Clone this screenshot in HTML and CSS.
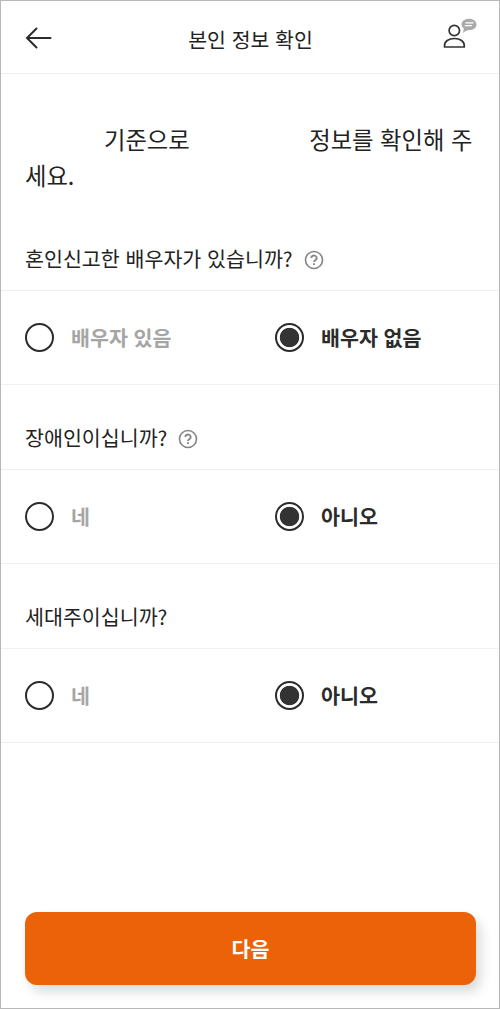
FILE: index.html
```html
<!DOCTYPE html>
<html lang="ko">
<head>
<meta charset="utf-8">
<title>본인 정보 확인</title>
<link rel="stylesheet" href="styles.css">
</head>
<body>
<div class="screen">
  <header class="header">
    <svg class="back" viewBox="0 0 28 24"><path d="M25.500 12H2M11.500 2.500L2 12l9.500 9.500"/></svg>
    <h1 class="title">본인 정보 확인</h1>
    <svg class="agent" viewBox="0 0 36 34"><circle cx="13.300" cy="12.500" r="5.200"/><path d="M3.500 29v-1.300c0-4.300 4-7.200 9.900-7.200s9.900 2.900 9.900 7.200V29z"/><path class="bubble" d="M28 .700c4.200 0 7.500 2.400 7.500 5.700s-3.300 5.600-7 5.700c-2 0-3.500.800-6.700 2.800l1.200-4.300c-1.600-1-2.500-2.500-2.500-4.200C20.500 3.100 23.800.700 28 .700z"/><path class="lines" d="M24.500 4.900h8M23.800 7.700h7"/></svg>
  </header>
  <main>
    <p class="intro"><span class="basis">기준으로</span><span class="confirm">정보를 확인해 주</span>세요.</p>
    <section class="question">
      <h2 class="label">혼인신고한 배우자가 있습니까?<svg class="help" viewBox="0 0 20 20"><circle cx="10" cy="10" r="8.500"/><path class="mark" d="M7.300 8a2.700 2.500 0 1 1 4.300 2c-1 .7-1.600 1-1.600 2M10 13.300v1.700"/></svg></h2>
      <div class="options"><div class="option"><i class="radio"></i><span class="choice">배우자 있음</span></div><div class="option selected"><i class="radio"></i><span class="choice">배우자 없음</span></div></div>
    </section>
    <section class="question">
      <h2 class="label">장애인이십니까?<svg class="help" viewBox="0 0 20 20"><circle cx="10" cy="10" r="8.500"/><path class="mark" d="M7.300 8a2.700 2.500 0 1 1 4.300 2c-1 .7-1.600 1-1.600 2M10 13.300v1.700"/></svg></h2>
      <div class="options"><div class="option"><i class="radio"></i><span class="choice">네</span></div><div class="option selected"><i class="radio"></i><span class="choice">아니오</span></div></div>
    </section>
    <section class="question">
      <h2 class="label">세대주이십니까?</h2>
      <div class="options"><div class="option"><i class="radio"></i><span class="choice">네</span></div><div class="option selected"><i class="radio"></i><span class="choice">아니오</span></div></div>
    </section>
  </main>
  <button class="next">다음</button>
</div>
</body>
</html>
```
FILE: styles.css
```css
* { box-sizing: border-box; }
body { margin: 0; background: #fff; color: #222; font-family: "Noto Sans CJK KR", sans-serif; }
.screen { height: 1009px; border: 1px solid #b8b8b8; display: flex; flex-direction: column; overflow: hidden; }
.header { height: 73px; flex: none; border-bottom: 1px solid #f0f0f0; display: grid; grid-template-columns: 60px 1fr 60px; align-items: center; }
.back { width: 28px; height: 24px; margin: 2px 0 0 24px; fill: none; stroke: #2b2b2b; stroke-width: 2; stroke-linecap: round; }
.title { margin: 3px 0 0 1px; text-align: center; font-size: 20.5px; font-weight: 400; line-height: 30px; }
.agent { width: 36px; height: 34px; margin: -4px 0 0 2px; fill: none; stroke: #333; stroke-width: 1.7; stroke-linejoin: round; }
.agent .bubble { fill: #aaa; stroke: none; }
.agent .lines { stroke: #fff; stroke-width: 1.2; }
.intro { height: 72px; margin: 47px 24px 0; font-size: 23.3px; line-height: 36px; word-break: break-all; }
.basis { margin-left: 79px; }
.confirm { margin-left: 119.500px; }
.question { height: 179px; display: flex; flex-direction: column; }
.question:first-of-type { height: 192px; }
.label { flex: 1; margin: 0; padding: 0 0 17px 24px; display: flex; align-items: flex-end; font-size: 20.6px; font-weight: 400; line-height: 30px; }
.help { width: 20px; height: 20px; margin: 0 0 3.5px 11px; fill: none; stroke: #858585; stroke-width: 1.6; }
.help .mark { stroke-width: 1.9; }
.options { height: 95px; flex: none; display: grid; grid-template-columns: 250px 1fr; border: solid #f0f0f0; border-width: 1px 0; }
.option { display: flex; align-items: center; padding-left: 24px; color: #a5a5a5; font-size: 20.6px; font-weight: 700; line-height: 28px; }
.choice { padding-bottom: 2px; }
.radio { width: 29px; height: 29px; margin-right: 17px; border: 2.4px solid #2b2b2b; border-radius: 50%; }
.selected { color: #2b2b2b; }
.selected .radio { background: radial-gradient(circle, #333 9.300px, #fff 10.100px); }
.next { height: 73px; flex: none; margin: auto 23px 23px 24px; padding: 0 0 2px; border: 0; border-radius: 12px; background: #eb6209; color: #fff; font: 700 20.6px "Noto Sans CJK KR", sans-serif; box-shadow: 5px 7px 12px rgba(0,0,0,.14); }
```
